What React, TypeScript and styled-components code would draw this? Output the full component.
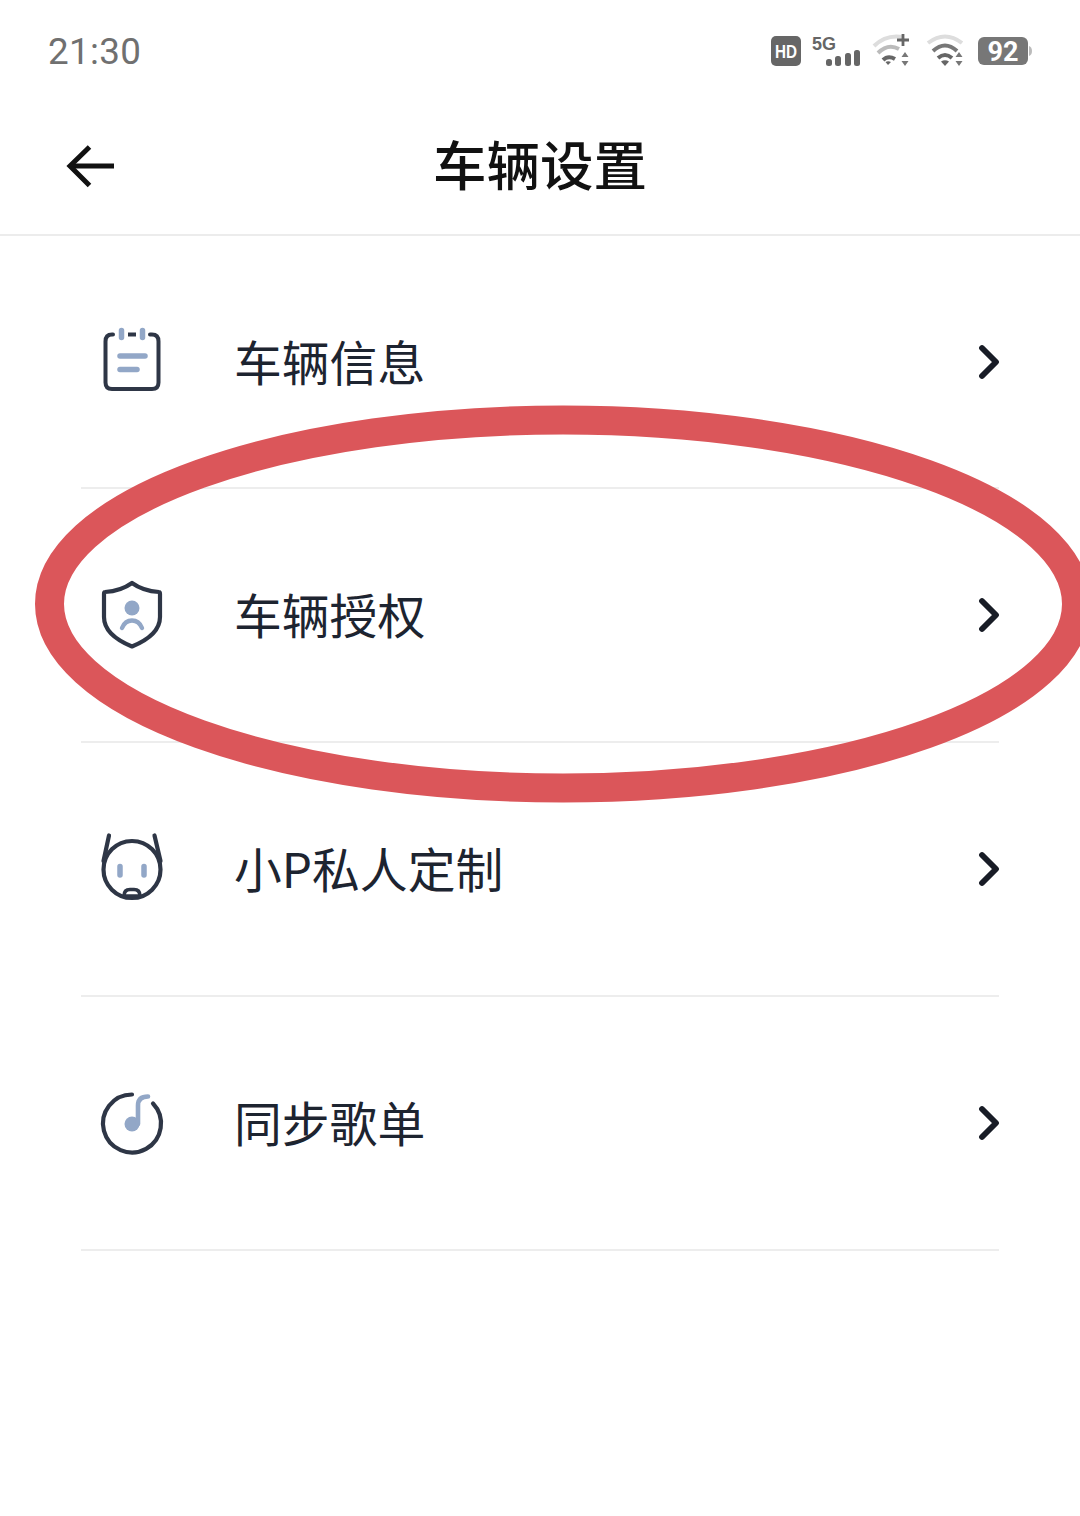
import React, { FC, ReactNode } from "react";
import styled, { createGlobalStyle } from "styled-components";

const GlobalStyle = createGlobalStyle`
  html, body { margin: 0; padding: 0; background: #fff; }
  body { font-family: "Noto Sans CJK SC", "Noto Sans", sans-serif; }
`;

const Page = styled.div`
  position: relative;
  width: 1080px;
  height: 1516px;
  overflow: hidden;
  background: #fff;
`;

const StatusBar = styled.div`
  height: 102px;
  padding: 0 47px 0 48px;
  box-sizing: border-box;
  display: flex;
  align-items: center;
  justify-content: space-between;
`;

const Time = styled.span`
  font-family: Roboto, sans-serif;
  font-size: 36.8px;
  color: #707070;
  letter-spacing: 0.3px;
`;

const StatusIcons = styled.svg`
  display: block;
  width: 270px;
  height: 60px;
  margin-right: -1px;
`;

const Header = styled.div`
  height: 134px;
  box-sizing: border-box;
  border-bottom: 2px solid #ececec;
  display: flex;
  align-items: center;
  justify-content: center;
  position: relative;
`;

const BackIcon = styled.svg`
  position: absolute;
  left: 41px;
  top: 18px;
  width: 100px;
  height: 90px;
`;

const Title = styled.h1`
  margin: 0 0 11px;
  font-size: 53.5px;
  line-height: 64px;
  font-weight: 500;
  color: #111;
`;

const List = styled.div`
  padding: 0 81px;
`;

const Row = styled.div`
  height: 254px;
  box-sizing: border-box;
  border-bottom: 2px solid #ededed;
  display: flex;
  align-items: center;

  &:first-child {
    height: 253px;
  }
`;

const IconSlot = styled.svg`
  width: 110px;
  height: 100px;
  margin-left: -1px;
  flex: none;
`;

const Label = styled.span`
  margin-left: 44px;
  margin-bottom: 2px;
  flex: 1;
  font-size: 47.8px;
  line-height: 60px;
  color: #1d2430;
`;

const Chevron = styled.svg`
  width: 24px;
  height: 36px;
  flex: none;
  margin-right: -2px;
`;

const Mark = styled.svg`
  position: absolute;
  left: 0;
  top: 0;
  width: 1080px;
  height: 1516px;
  pointer-events: none;
`;

const DARK = "#2e3646";
const BLUE = "#92a7c7";

const rows: { label: string; icon: ReactNode }[] = [
  {
    label: "车辆信息",
    icon: (
      <g transform="translate(0 -1.500)">
        <path
          d="M33 24 H32 Q25.500 24 25.500 31 V72 Q25.500 78.500 32 78.500 H72 Q78.500 78.500 78.500 72 V31 Q78.500 24 72 24 H70"
          fill="none"
          stroke={DARK}
          strokeWidth="4"
          strokeLinecap="round"
        />
        <path d="M48 24 H56" stroke={DARK} strokeWidth="4" />
        <path d="M41.500 20 V27 M62.500 20 V27" stroke={BLUE} strokeWidth="5.500" strokeLinecap="round" />
        <path d="M40 45.500 H65" stroke={BLUE} strokeWidth="5.500" strokeLinecap="round" />
        <path d="M40 59 H57" stroke={BLUE} strokeWidth="5.500" strokeLinecap="round" />
      </g>
    )
  },
  {
    label: "车辆授权",
    icon: (
      <>
        <path
          d="M52 18 Q41 26 25 27 Q24 27 24 29 V52 Q24 70 52 81.500 Q80 70 80 52 V29 Q80 27 79 27 Q63 26 52 18 Z"
          fill="none"
          stroke={DARK}
          strokeWidth="4.200"
          strokeLinejoin="round"
        />
        <circle cx="52" cy="43" r="7.500" fill={BLUE} />
        <path d="M42 63 Q45 55.500 52 55.500 Q59 55.500 62 63" fill="none" stroke={BLUE} strokeWidth="4.400" strokeLinecap="round" />
      </>
    )
  },
  {
    label: "小P私人定制",
    icon: (
      <>
        <circle cx="52" cy="50.500" r="28.500" fill="none" stroke={DARK} strokeWidth="4.200" />
        <path d="M29 16.500 L23.500 42 M74.500 16.500 L80.500 42" stroke={DARK} strokeWidth="4.200" strokeLinecap="round" />
        <path d="M40 47.500 V56 M64 47.500 V56" stroke={BLUE} strokeWidth="5.500" strokeLinecap="round" />
        <path
          d="M44 77 Q44 70.500 50 70.500 H54 Q60 70.500 60 77 Z"
          fill="#fff"
          stroke={DARK}
          strokeWidth="3.600"
          strokeLinejoin="round"
        />
      </>
    )
  },
  {
    label: "同步歌单",
    icon: (
      <g transform="translate(0 1.500)">
        <path
          d="M52 20 A29 29 0 1 0 73 29"
          fill="none"
          stroke={DARK}
          strokeWidth="4.200"
          strokeLinecap="round"
        />
        <circle cx="52" cy="49.500" r="7.500" fill={BLUE} />
        <path d="M58 49.500 V31 Q58 22 68 22" fill="none" stroke={BLUE} strokeWidth="4.600" strokeLinecap="round" />
      </g>
    )
  }
];

const StatusGraphic: FC = () => (
  <StatusIcons viewBox="-2 -10 270 60">
    {/* HD */}
    <rect x="5" y="5" width="30" height="30" rx="5" fill="#666" />
    <text x="20" y="26.500" textAnchor="middle" fontFamily="Liberation Sans" fontWeight="700" fontSize="18" fill="#fff" textLength="22" lengthAdjust="spacingAndGlyphs">
      HD
    </text>
    {/* 5G with bars */}
    <text x="46" y="19" fontFamily="Liberation Sans" fontWeight="700" fontSize="18" fill="#666" textLength="24" lengthAdjust="spacingAndGlyphs">
      5G
    </text>
    <rect x="60" y="28" width="6" height="7" rx="2.500" fill="#666" />
    <rect x="69" y="25" width="6" height="10" rx="2.500" fill="#666" />
    <rect x="79" y="22" width="6" height="13" rx="2.500" fill="#666" />
    <rect x="88" y="19" width="6" height="16" rx="2.500" fill="#666" />
    {/* wifi 1 with plus */}
    <path d="M108 15 Q120 3 137 6" fill="none" stroke="#ddd" strokeWidth="4" />
    <path d="M112 22 Q122 12 133 18" fill="none" stroke="#bbb" strokeWidth="4" />
    <path d="M117 29 Q122 24 129 28" fill="none" stroke="#666" strokeWidth="4" />
    <path d="M122 34 L119.500 31 Q122 29.500 125 31 Z" fill="#666" />
    <path d="M137 3 V15 M131 9 H143" stroke="#666" strokeWidth="2.800" />
    <path d="M139 21 L142.500 26 H135.500 Z M139 35 L142.500 30 H135.500 Z" fill="#777" />
    {/* wifi 2 */}
    <path d="M162 12 Q179 -1 196 12" fill="none" stroke="#ddd" strokeWidth="4" />
    <path d="M167 20 Q179 9 191 20" fill="none" stroke="#777" strokeWidth="4" />
    <path d="M172 27 Q179 21 186 27" fill="none" stroke="#666" strokeWidth="4" />
    <path d="M179 35 L175 30.500 Q179 28 183 30.500 Z" fill="#666" />
    <path d="M193 21 L196.500 26 H189.500 Z M193 35 L196.500 30 H189.500 Z" fill="#777" />
    {/* battery */}
    <rect x="212" y="6" width="50" height="28" rx="6" fill="#777" />
    <path d="M263 15 Q266 16 266 20 Q266 24 263 25 Z" fill="#bbb" />
    <text x="237" y="30" textAnchor="middle" fontFamily="Roboto" fontWeight="700" fontSize="27" fill="#fff">
      92
    </text>
  </StatusIcons>
);

const App: FC = () => (
  <Page>
    <GlobalStyle />
    <StatusBar>
      <Time>21:30</Time>
      <StatusGraphic />
    </StatusBar>
    <Header>
      <BackIcon viewBox="0 0 100 90">
        <path d="M73 46 H32" stroke="#111" strokeWidth="5" />
        <path d="M48.500 27 L29 46 L48.500 65.500" fill="none" stroke="#111" strokeWidth="5" />
      </BackIcon>
      <Title>车辆设置</Title>
    </Header>
    <List>
      {rows.map(row => (
        <Row key={row.label}>
          <IconSlot viewBox="0 0 110 100">{row.icon}</IconSlot>
          <Label>{row.label}</Label>
          <Chevron viewBox="0 0 24 36">
            <path d="M5 4 L19 18 L5 32" fill="none" stroke="#181c26" strokeWidth="5.800" strokeLinecap="round" strokeLinejoin="round" />
          </Chevron>
        </Row>
      ))}
    </List>
    <Mark viewBox="0 0 1080 1516">
      <ellipse cx="563" cy="604" rx="513.500" ry="184" fill="none" stroke="#db565a" strokeWidth="29" />
    </Mark>
  </Page>
);

export default App;
